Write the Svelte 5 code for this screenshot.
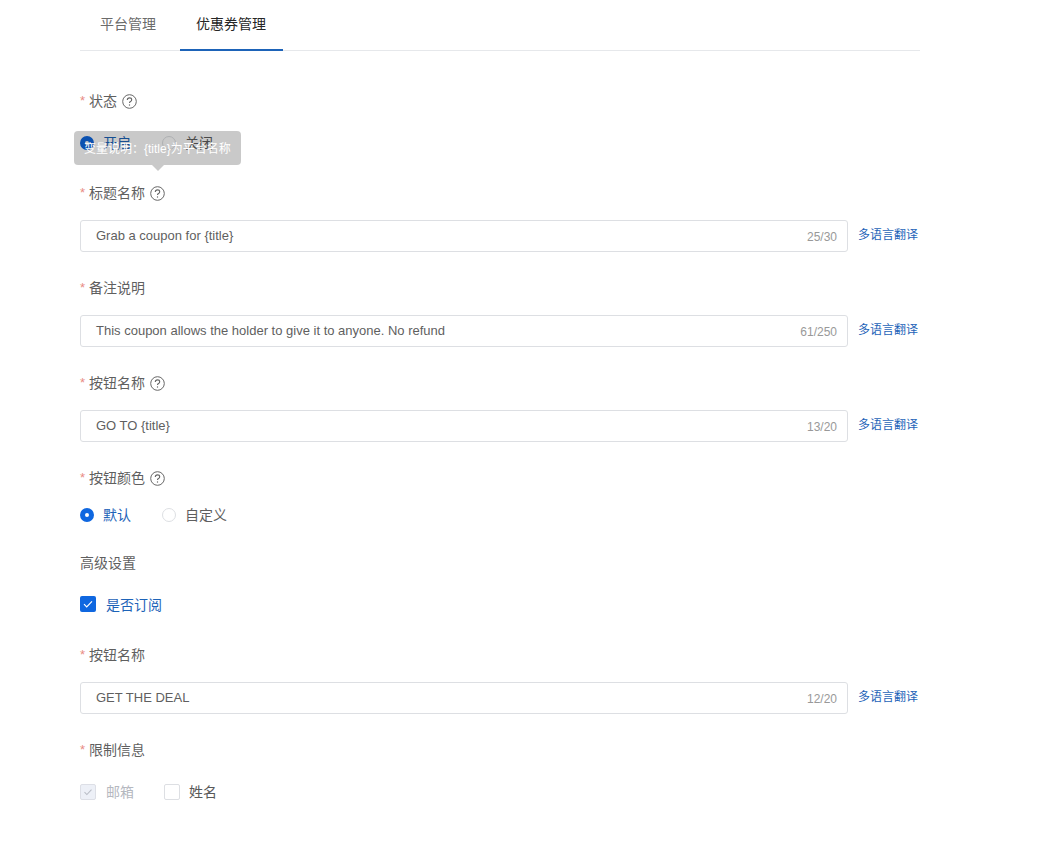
<script lang="ts">
  const tabs = [
    { label: '平台管理', active: false },
    { label: '优惠券管理', active: true }
  ];
</script>

{#snippet help()}
  <svg class="help" viewBox="0 0 15 15" width="15" height="15" fill="none" aria-hidden="true">
    <circle cx="7.5" cy="7.5" r="6.8" stroke="#666" stroke-width="1" />
    <path d="M5.3 6c0-1.3.9-2.1 2.2-2.1s2.2.8 2.2 1.9c0 .9-.5 1.3-1.2 1.8-.7.4-1 .8-1 1.5" stroke="#666" stroke-width="1.1" />
    <circle cx="7.5" cy="11" r=".7" fill="#666" />
  </svg>
{/snippet}

{#snippet label(text: string, required = true, hint = false)}
  <div class="label">
    {#if required}<span class="star">*</span>{/if}
    <span>{text}</span>
    {#if hint}{@render help()}{/if}
  </div>
{/snippet}

{#snippet input(value: string, count: string)}
  <div class="input-row">
    <div class="input">
      <span class="value">{value}</span>
      <span class="count">{count}</span>
    </div>
    <a class="translate" href="#top">多语言翻译</a>
  </div>
{/snippet}

{#snippet radios(a: string, b: string)}
  <div class="radios">
    <span class="radio on"><i></i>{a}</span>
    <span class="radio"><i></i>{b}</span>
  </div>
{/snippet}

<div class="page">
  <div class="tabs">
    {#each tabs as tab}
      <div class="tab" class:active={tab.active}>{tab.label}</div>
    {/each}
  </div>

  <div class="form">
    <section class="status">
      {@render label('状态', true, true)}
      {@render radios('开启', '关闭')}
      <div class="tooltip">变量说明：{'{title}'}为平台名称</div>
    </section>

    <section>
      {@render label('标题名称', true, true)}
      {@render input('Grab a coupon for {title}', '25/30')}
    </section>

    <section>
      {@render label('备注说明')}
      {@render input('This coupon allows the holder to give it to anyone. No refund', '61/250')}
    </section>

    <section>
      {@render label('按钮名称', true, true)}
      {@render input('GO TO {title}', '13/20')}
    </section>

    <section class="color">
      {@render label('按钮颜色', true, true)}
      {@render radios('默认', '自定义')}
    </section>

    <div class="heading">高级设置</div>

    <div class="check-row subscribe">
      <span class="check on">
        <svg viewBox="0 0 16 16" width="16" height="16" fill="none"><path d="M4 8.2l2.7 2.7L12 5.4" stroke="#fff" stroke-width="1.2" /></svg>
        <em>是否订阅</em>
      </span>
    </div>

    <section>
      {@render label('按钮名称')}
      {@render input('GET THE DEAL', '12/20')}
    </section>

    <section class="limit">
      {@render label('限制信息')}
      <div class="check-row">
        <span class="check disabled">
          <svg viewBox="0 0 16 16" width="16" height="16" fill="none"><path d="M4 8.2l2.7 2.7L12 5.4" stroke="#b9bdc6" stroke-width="1.2" /></svg>
          <em>邮箱</em>
        </span>
        <span class="check"><b></b><em>姓名</em></span>
      </div>
    </section>
  </div>
</div>

<style>
  :global(body) {
    background: #fff;
    font-family: "Liberation Sans", "Noto Sans CJK SC", sans-serif;
    font-size: 14px;
    color: #595959;
  }

  .page {
    width: 840px;
    margin-left: 80px;
  }

  .tabs {
    display: flex;
    height: 50px;
    border-bottom: 1px solid #e6e8eb;
  }

  .tab {
    padding: 0 17px 0 16px;
    line-height: 48px;
    height: 49px;
    color: #6b6b6b;
  }

  .tab:first-child {
    padding: 0 24px 2px 20px;
    height: 47px;
  }

  .tab.active {
    color: #262626;
    border-bottom: 2px solid #1d63b8;
  }

  .form {
    padding-top: 39px;
  }

  section {
    position: relative;
    margin-bottom: 25px;
  }

  .label {
    display: flex;
    align-items: center;
    height: 22px;
    line-height: 22px;
    margin-bottom: 16px;
    color: #5f5f5f;
  }

  .star {
    color: #e98b84;
    width: 9px;
    font-size: 13px;
    line-height: 18px;
  }

  .help {
    margin-left: 5px;
  }

  .input-row {
    display: flex;
    align-items: center;
    gap: 10px;
  }

  .input {
    flex: none;
    width: 768px;
    height: 32px;
    box-sizing: border-box;
    border: 1px solid #dddfe3;
    border-radius: 3px;
    display: flex;
    align-items: center;
    justify-content: space-between;
    padding: 0 10px 0 15px;
    font-size: 13px;
  }

  .value {
    color: #5f5f5f;
    margin-top: -2px;
  }

  .count {
    font-size: 12px;
    color: #999;
    padding-top: 2px;
  }

  .translate {
    font-size: 12px;
    color: #1d63b8;
    text-decoration: none;
    white-space: nowrap;
    margin-top: -5px;
  }

  .radios {
    display: flex;
    align-items: center;
    height: 30px;
  }

  .radio {
    display: flex;
    align-items: center;
    color: #5f5f5f;
    margin-right: 31px;
    margin-bottom: 2px;
  }

  .radio i {
    width: 14px;
    height: 14px;
    box-sizing: border-box;
    border: 1px solid #dddfe3;
    border-radius: 50%;
    margin-right: 9px;
    margin-top: 2px;
    background: #fff;
  }

  .radio.on {
    color: #1d63b8;
  }

  .radio.on i {
    border: 5px solid #0f67e0;
  }

  .status {
    margin-bottom: 24px;
  }

  .tooltip {
    position: absolute;
    left: -6px;
    top: 41px;
    width: 167px;
    height: 34px;
    box-sizing: border-box;
    padding: 0 10px;
    line-height: 36px;
    font-size: 12px;
    white-space: nowrap;
    color: #fff;
    border-radius: 4px;
    background: rgba(0, 0, 0, 0.21);
  }

  .tooltip::after {
    content: "";
    position: absolute;
    left: 78px;
    top: 34px;
    border: 6px solid transparent;
    border-top-color: rgba(0, 0, 0, 0.21);
    border-bottom: 0;
  }

  .color {
    margin-bottom: 22px;
  }

  .color .label {
    margin-bottom: 11px;
  }

  .heading {
    height: 22px;
    line-height: 22px;
    color: #5f5f5f;
    margin-bottom: 20px;
  }

  .check-row {
    display: flex;
    align-items: center;
    height: 20px;
  }

  .subscribe {
    margin-bottom: 30px;
  }

  .limit .check-row {
    margin-top: 21px;
  }

  .limit .label {
    margin-bottom: 0;
  }

  .limit em {
    margin-top: -2px;
  }

  .check {
    display: flex;
    align-items: center;
    margin-right: 30px;
  }

  .check svg,
  .check b {
    width: 16px;
    height: 16px;
    box-sizing: border-box;
    border-radius: 2px;
    flex: none;
  }

  .check b {
    border: 1px solid #dddfe3;
  }

  .check em {
    font-style: normal;
    margin-left: 10px;
  }

  .check b + em {
    margin-left: 9px;
  }

  .check.on svg {
    background: #0f67e0;
  }

  .check.on em {
    color: #1d63b8;
  }

  .check.disabled svg {
    background: #edf0f7;
    border: 1px solid #dddfe6;
  }

  .check.disabled em {
    color: #b5b8bf;
  }
</style>
